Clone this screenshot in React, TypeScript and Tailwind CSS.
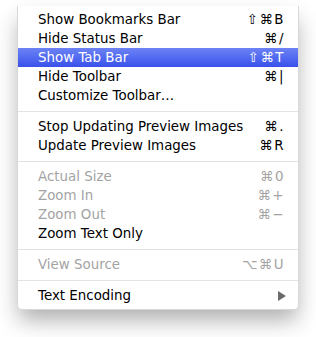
import React from "react";

type Item =
  | { type: "sep" }
  | { type: "item"; label: string; sc?: string; disabled?: boolean; active?: boolean; sub?: boolean };

const items: Item[] = [
  { type: "item", label: "Show Bookmarks Bar", sc: "⇧⌘B" },
  { type: "item", label: "Hide Status Bar", sc: "⌘/" },
  { type: "item", label: "Show Tab Bar", sc: "⇧⌘T", active: true },
  { type: "item", label: "Hide Toolbar", sc: "⌘|" },
  { type: "item", label: "Customize Toolbar…" },
  { type: "sep" },
  { type: "item", label: "Stop Updating Preview Images", sc: "⌘." },
  { type: "item", label: "Update Preview Images", sc: "⌘R" },
  { type: "sep" },
  { type: "item", label: "Actual Size", sc: "⌘0", disabled: true },
  { type: "item", label: "Zoom In", sc: "⌘+", disabled: true },
  { type: "item", label: "Zoom Out", sc: "⌘−", disabled: true },
  { type: "item", label: "Zoom Text Only" },
  { type: "sep" },
  { type: "item", label: "View Source", sc: "⌥⌘U", disabled: true },
  { type: "sep" },
  { type: "item", label: "Text Encoding", sub: true },
];

export default function App() {
  return (
    <div className="w-[316px] h-[337px] bg-white overflow-hidden pt-[6px] pl-[17px]" style={{ fontFamily: '"DejaVu Sans", sans-serif' }}>
      <div className="w-[282px] bg-white rounded-b-[5px] border border-t-0 border-[#d8d8d8] py-[4px] shadow-[0_12px_22px_-2px_rgba(0,0,0,0.32)]">
        {items.map((it, i) =>
          it.type === "sep" ? (
            <div key={i} className="h-[12px] flex items-center">
              <div className="h-px w-full bg-[#e3e3e3]" />
            </div>
          ) : (
            <div
              key={i}
              className={
                "h-[19px] flex items-center justify-between pl-[20px] pr-[13px] text-[13.4px] leading-none " +
                (it.active
                  ? "bg-gradient-to-b from-[#6d82f5] to-[#3a50ea] text-white"
                  : it.disabled
                  ? "text-[#a3a3a3]"
                  : "text-black")
              }
            >
              <span>{it.label}</span>
              {it.sc && <span className="tracking-[1.5px]">{it.sc}</span>}
              {it.sub && (
                <svg width="8" height="10" viewBox="0 0 8 10" className="mr-[-1px]">
                  <path d="M0 0 L8 5 L0 10 Z" fill="#6b6b6b" />
                </svg>
              )}
            </div>
          )
        )}
      </div>
    </div>
  );
}
